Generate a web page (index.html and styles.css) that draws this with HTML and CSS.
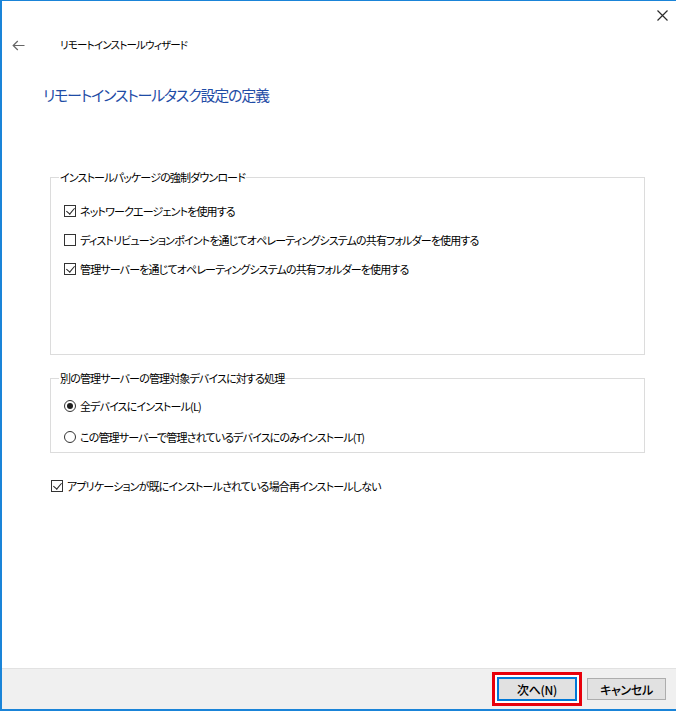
FILE: index.html
```html
<!DOCTYPE html>
<html lang="ja">
<head>
<meta charset="utf-8">
<title>リモートインストールウィザード</title>
<link rel="stylesheet" href="styles.css">
</head>
<body>
<div class="window">
  <div class="titlebar">
    <svg class="close" width="11" height="11" viewBox="0 0 11 11"><path d="M0.5 0.5L10.5 10.5M10.5 0.5L0.5 10.5" stroke="#2b2b2b" stroke-width="1.2" fill="none"/></svg>
  </div>
  <div class="nav">
    <svg class="back" width="13" height="11" viewBox="0 0 13 11"><path d="M12.5 5.5H1.2M5.8 1L1.2 5.5L5.8 10" stroke="#666" stroke-width="1.2" fill="none"/></svg>
    <span class="wizard-title">リモートインストールウィザード</span>
  </div>
  <main class="content">
    <h1 class="heading">リモートインストールタスク設定の定義</h1>

    <fieldset class="group group-download">
      <legend>インストールパッケージの強制ダウンロード</legend>
      <div class="row"><span class="check checked"></span><span class="label">ネットワークエージェントを使用する</span></div>
      <div class="row"><span class="check"></span><span class="label">ディストリビューションポイントを通じてオペレーティングシステムの共有フォルダーを使用する</span></div>
      <div class="row"><span class="check checked"></span><span class="label">管理サーバーを通じてオペレーティングシステムの共有フォルダーを使用する</span></div>
    </fieldset>

    <fieldset class="group group-devices">
      <legend>別の管理サーバーの管理対象デバイスに対する処理</legend>
      <div class="row row-radio"><span class="radio selected"></span><span class="label">全デバイスにインストール(L)</span></div>
      <div class="row row-radio"><span class="radio"></span><span class="label">この管理サーバーで管理されているデバイスにのみインストール(T)</span></div>
    </fieldset>

    <div class="row standalone"><span class="check checked"></span><span class="label">アプリケーションが既にインストールされている場合再インストールしない</span></div>
  </main>
  <footer class="footer">
    <span class="highlight"><button class="btn btn-default">次へ(N)</button></span>
    <button class="btn btn-cancel">キャンセル</button>
  </footer>
</div>
</body>
</html>
```

FILE: styles.css
```css
* { box-sizing: border-box; }
html, body { margin: 0; padding: 0; background: #fff; }
body {
  font-family: "Noto Sans CJK JP", "Noto Sans", sans-serif;
  font-size: 11px;
  letter-spacing: -0.85px;
  color: #000;
  font-feature-settings: "palt";
}
.window {
  width: 676px;
  height: 711px;
  border-top: 1px solid #1a84d8;
  border-left: 2px solid #1a84d8;
  border-bottom: 2px solid #1a84d8;
  display: flex;
  flex-direction: column;
  background: #fff;
  overflow: hidden;
}
.titlebar {
  height: 30px;
  display: flex;
  justify-content: flex-end;
  align-items: flex-start;
  padding: 9px 8px 0 0;
}
.close { display: block; }
.nav {
  height: 28px;
  display: flex;
  align-items: center;
  padding-left: 10px;
}
.back { display: block; }
.wizard-title {
  margin-left: 35px;
  font-size: 10.5px;
  letter-spacing: -0.8px;
  line-height: 16px;
}
.content {
  flex: 1;
  padding: 0 31px 0 48px;
}
.heading {
  margin: 24px 0 0 -7px;
  font-size: 15px;
  letter-spacing: -1.2px;
  line-height: 24px;
  font-weight: normal;
  color: #1f4ca6;
}
.group {
  margin: 0;
  border: 1px solid #dcdcdc;
  padding: 0 8px;
}
.group legend {
  padding: 0 1px;
  line-height: 16px;
  font-size: 11px;
}
.group-download {
  margin-top: 62px;
  padding-top: 11px;
  padding-bottom: 71px;
}
.group-devices {
  margin-top: 15px;
  padding-top: 4px;
  padding-bottom: 0;
}
.row {
  height: 29px;
  display: flex;
  align-items: center;
  padding-left: 5px;
}
.row-radio { height: 31px; }
.label { line-height: 16px; white-space: nowrap; }
.check {
  width: 12px;
  height: 12px;
  border: 1px solid #333;
  margin-right: 4px;
  flex: none;
  position: relative;
  background: #fff;
}
.check.checked::after {
  content: "";
  position: absolute;
  left: 3px;
  top: 0px;
  width: 4px;
  height: 7px;
  border-right: 1.3px solid #222;
  border-bottom: 1.3px solid #222;
  transform: rotate(40deg);
}
.radio {
  width: 12px;
  height: 12px;
  border: 1px solid #333;
  border-radius: 50%;
  margin-right: 4px;
  flex: none;
  display: flex;
  align-items: center;
  justify-content: center;
  background: #fff;
}
.radio.selected::after {
  content: "";
  width: 6px;
  height: 6px;
  border-radius: 50%;
  background: #1e1e1e;
}
.standalone {
  margin-top: 18px;
  padding-left: 1px;
}
.footer {
  height: 41px;
  border-top: 1px solid #e2e2e2;
  background: #f0f0f0;
  display: flex;
  justify-content: flex-end;
  align-items: center;
  gap: 5px;
  padding-right: 10px;
  letter-spacing: 0;
}
.highlight {
  display: block;
  border: 3px solid #e8000b;
  padding: 2px;
  background: #fff;
}
.btn {
  font-family: inherit;
  font-feature-settings: "palt";
  font-size: 12px;
  letter-spacing: -0.3px;
  font-weight: 500;
  color: #000;
  background: #e1e1e1;
  border: 1px solid #adadad;
  padding: 0;
  margin: 0;
  display: block;
}
.btn-default {
  width: 80px;
  height: 24px;
  border: 2px solid #0078d7;
}
.btn-cancel {
  width: 79px;
  height: 22px;
}
```
